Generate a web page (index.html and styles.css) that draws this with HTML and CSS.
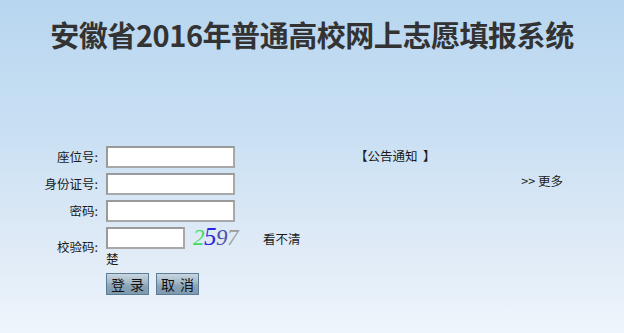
FILE: index.html
```html
<!DOCTYPE html>
<html lang="zh">
<head>
<meta charset="utf-8">
<title>安徽省2016年普通高校网上志愿填报系统</title>
<link rel="stylesheet" href="styles.css">
</head>
<body>
<div class="page">
  <h1 class="title">安徽省2016年普通高校网上志愿填报系统</h1>
  <div class="main">
    <form class="login">
      <label class="lbl" for="zwh">座位号:</label>
      <div class="field"><input id="zwh" class="inp" type="text"></div>
      <label class="lbl" for="sfz">身份证号:</label>
      <div class="field"><input id="sfz" class="inp" type="text"></div>
      <label class="lbl" for="mm">密码:</label>
      <div class="field"><input id="mm" class="inp" type="password"></div>
      <label class="lbl lbl-code" for="yzm">校验码:</label>
      <div class="field field-code">
        <div class="code-line">
          <input id="yzm" class="inp inp-code" type="text">
          <span class="captcha"><span class="d1">2</span><span class="d2">5</span><span class="d3">9</span><span class="d4">7</span></span>
          <a class="refresh">看不清</a>
        </div>
        <div class="code-wrap">楚</div>
      </div>
      <div class="lbl"></div>
      <div class="field buttons">
        <button type="button" class="btn">登 录</button>
        <button type="button" class="btn">取 消</button>
      </div>
    </form>
    <div class="notice">
      <div class="notice-head">【公告通知&nbsp;&nbsp;】</div>
      <div class="notice-more">&gt;&gt; 更多</div>
    </div>
  </div>
</div>
</body>
</html>
```
FILE: styles.css
```css
html, body {
  margin: 0;
  padding: 0;
}
body {
  width: 624px;
  height: 333px;
  overflow: hidden;
  background: linear-gradient(to bottom, #b8d6f0 0%, #c9e0f3 40%, #dde9f6 70%, #eef5fc 100%);
  font-family: "Noto Sans CJK SC", "DejaVu Sans", sans-serif;
  color: #1a1a1a;
  font-size: 12.5px;
}
.page {
  width: 624px;
  height: 333px;
}
.title {
  margin: 0;
  padding-top: 17px;
  height: 129px;
  box-sizing: border-box;
  text-align: center;
  font-size: 29px;
  line-height: 34px;
  font-weight: bold;
  color: #333;
  letter-spacing: -0.45px;
}
.main {
  display: flex;
  align-items: flex-start;
  padding-top: 17px;
}
.login {
  display: grid;
  grid-template-columns: 98px 200px;
  column-gap: 8px;
  row-gap: 5px;
  align-items: center;
}
.lbl {
  text-align: right;
  font-size: 12.5px;
  line-height: 16px;
}
.field {
  display: flex;
  align-items: center;
}
.inp {
  width: 129px;
  height: 22px;
  box-sizing: border-box;
  border: 2px solid #9a9a9a;
  border-color: #9a9a9a #a8a8a8 #a8a8a8 #9a9a9a;
  background: #fff;
  margin: 0;
  padding: 0 2px;
}
.field-code {
  flex-direction: column;
  align-items: flex-start;
}
.code-line {
  display: flex;
  align-items: flex-start;
  height: 24px;
}
.inp-code {
  width: 79px;
}
.captcha {
  margin-left: 8px;
  font-family: "Liberation Serif", serif;
  font-style: italic;
  font-size: 23px;
  line-height: 20px;
  letter-spacing: -0.5px;
}
.d1 { color: #3fdc5a; }
.d2 { color: #2a22e0; font-size: 25px; }
.d3 { color: #5050a8; }
.d4 { color: #9a9a9a; }
.refresh {
  margin-left: 25px;
  margin-top: 4px;
  line-height: 16px;
}
.code-wrap {
  line-height: 16px;
  margin-top: 0;
}
.buttons {
  gap: 7px;
  margin-top: 1px;
}
.btn {
  width: 43px;
  height: 22px;
  box-sizing: border-box;
  margin: 0;
  padding: 0 0 0 1px;
  border: 1px solid #5b7d98;
  background: linear-gradient(to bottom, #c9d6df 0%, #a6b9c7 40%, #8aa3b6 60%, #7f99ad 100%);
  font-family: "Noto Sans CJK SC", sans-serif;
  font-size: 14px;
  line-height: 20px;
  color: #111;
  letter-spacing: 1px;
}
.notice {
  margin-left: 47px;
  width: 220px;
  padding-top: 2px;
}
.notice-head {
  margin-left: 2px;
  line-height: 16px;
}
.notice-more {
  text-align: right;
  margin-top: 9px;
  padding-right: 10px;
  line-height: 16px;
}
```
